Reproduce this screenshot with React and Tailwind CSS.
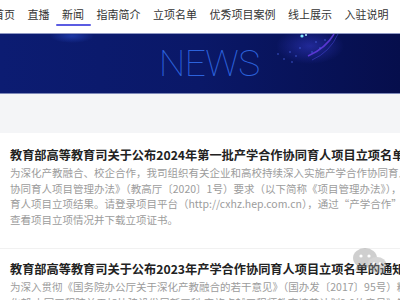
import React from "react";

const navItems = ["首页", "直播", "新闻", "指南简介", "立项名单", "优秀项目案例", "线上展示", "入驻说明"];

const news = [
  {
    title: "教育部高等教育司关于公布2024年第一批产学合作协同育人项目立项名单的通知",
    lines: [
      "为深化产教融合、校企合作，我司组织有关企业和高校持续深入实施产学合作协同育人项目，根据《教育部产学合作",
      "协同育人项目管理办法》（教高厅〔2020〕1号）要求（以下简称《项目管理办法》），现公布2024年第一批",
      "育人项目立项结果。请登录项目平台（http://cxhz.hep.com.cn），通过“产学合作”—“用户中心”",
      "查看项目立项情况并下载立项证书。",
    ],
  },
  {
    title: "教育部高等教育司关于公布2023年产学合作协同育人项目立项名单的通知",
    lines: [
      "为深入贯彻《国务院办公厅关于深化产教融合的若干意见》（国办发〔2017〕95号）精神，",
      "化部 中国工程院关于加快建设发展新工科 实施卓越工程师教育培养计划2.0的意见》等文件",
    ],
  },
];

const WechatMark = () => (
  <svg width="36" height="28" viewBox="0 0 36 28" className="absolute left-[351px] top-[248px] opacity-40">
    <ellipse cx="14" cy="10" rx="12" ry="10" fill="#8a8a8a" />
    <path d="M6 17 L4 23 L11 19 Z" fill="#8a8a8a" />
    <circle cx="10" cy="8" r="1.6" fill="#fff" />
    <circle cx="18" cy="8" r="1.6" fill="#fff" />
    <ellipse cx="26" cy="17" rx="9.5" ry="8" fill="#9a9a9a" />
    <path d="M31 22 L33 27 L27 24 Z" fill="#9a9a9a" />
    <circle cx="23" cy="15.5" r="1.3" fill="#fff" />
    <circle cx="29" cy="15.5" r="1.3" fill="#fff" />
  </svg>
);

export default function App() {
  return (
    <div
      className="relative w-[400px] h-[300px] overflow-hidden bg-white"
      style={{ fontFamily: '"Noto Sans CJK SC", "Noto Sans", sans-serif' }}
    >
      {/* Nav */}
      <nav className="h-[33px] flex gap-[12.5px] ml-[-7px] bg-white whitespace-nowrap">
        {navItems.map((n) => (
          <div key={n} className="relative mt-[6px] text-[11px] leading-[16px] text-[#333]">
            {n}
            {n === "新闻" && (
              <div className="absolute left-[-6px] right-[-7px] top-[18px] h-[2px] rounded-full bg-[#5b5ce2]" />
            )}
          </div>
        ))}
      </nav>

      {/* Banner */}
      <div className="relative h-[61px] bg-gradient-to-r from-[#0c1c72] via-[#0a1868] to-[#060e4c] border-t border-[#8f98c4] border-b border-b-[#7d88b8]">
        <svg width="400" height="61" viewBox="0 0 400 61" className="absolute inset-0">
          <defs>
            <radialGradient id="g1" cx="0.5" cy="0.5" r="0.5">
              <stop offset="0" stopColor="#2a4fd0" stopOpacity="0.55" />
              <stop offset="1" stopColor="#2a4fd0" stopOpacity="0" />
            </radialGradient>
            <radialGradient id="g2" cx="0.5" cy="0.5" r="0.5">
              <stop offset="0" stopColor="#3a3fd8" stopOpacity="0.5" />
              <stop offset="1" stopColor="#3a3fd8" stopOpacity="0" />
            </radialGradient>
          </defs>
          <ellipse cx="72" cy="2" rx="22" ry="7" fill="url(#g1)" />
          <ellipse cx="310" cy="12" rx="34" ry="18" fill="url(#g2)" />
          <path d="M334 0 Q326 14 308 22" stroke="#6a3de8" strokeWidth="1.6" fill="none" opacity="0.8" />
          <path d="M338 0 Q330 18 312 26" stroke="#4a48e0" strokeWidth="1" fill="none" opacity="0.5" />
          <circle cx="302" cy="2" r="1.6" fill="#7fe6ff" />
          <circle cx="306" cy="1" r="1" fill="#b0f0ff" />
          {[
            [290, 18], [296, 22], [284, 25], [300, 14], [316, 8], [320, 14], [278, 20], [292, 28], [312, 18], [325, 6],
          ].map(([x, y], i) => (
            <circle key={i} cx={x} cy={y} r="0.8" fill="#4f6cf0" opacity="0.8" />
          ))}
        </svg>
        <div
          className="relative pl-[159px] pt-[11px] text-[37px] leading-[37px] font-thin text-[#2c62dc] tracking-[-0.5px]"
          style={{ fontFamily: 'Roboto, "Liberation Sans", sans-serif' }}
        >
          NEWS
        </div>
      </div>

      {/* Gray band */}
      <div className="h-[39px] bg-[#f4f5f7]" />

      {/* List */}
      <div className="whitespace-nowrap">
        {news.map((item, i) => (
          <div
            key={i}
            className={i === 0 ? "pl-[10px] pt-[13px] pb-[21px] border-b border-[#f1f1f1]" : "pl-[10px] pt-[11px]"}
          >
            <div className="text-[12.2px] leading-[18px] font-bold text-[#222]">{item.title}</div>
            <div className="mt-[1px] text-[10.5px] leading-[15.5px] text-[#9c9c9c]">
              {item.lines.map((l, j) => (
                <div key={j}>{l}</div>
              ))}
            </div>
          </div>
        ))}
      </div>

      <WechatMark />
    </div>
  );
}
